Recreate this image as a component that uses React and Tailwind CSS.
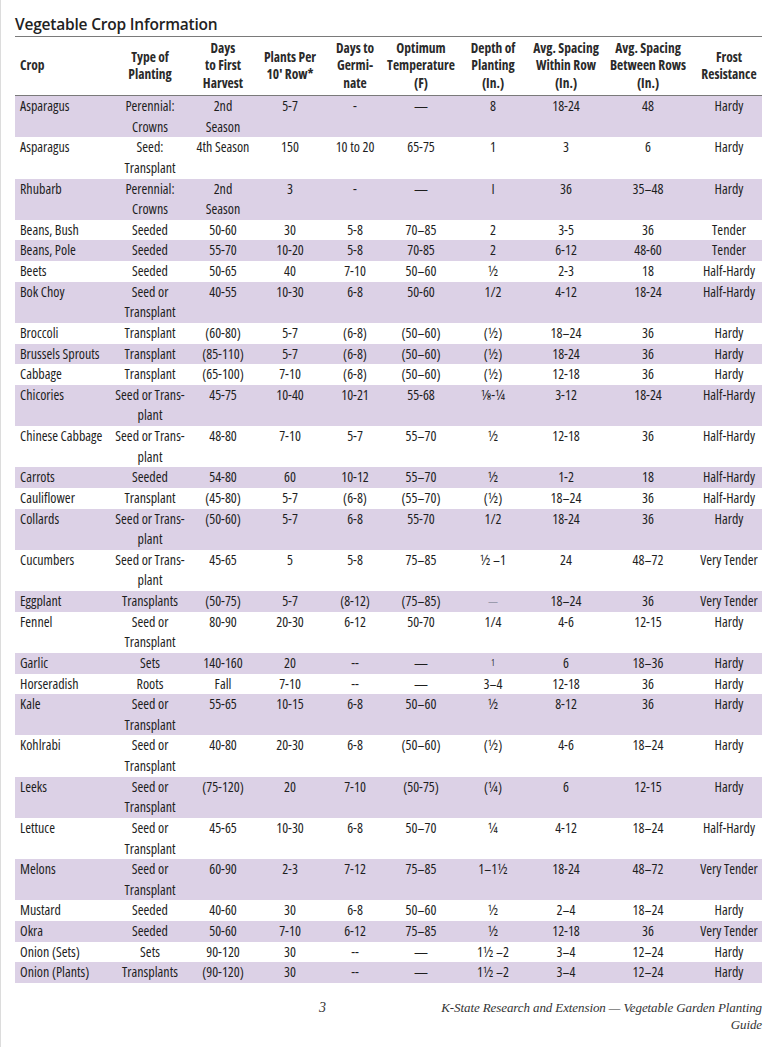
import React from "react";

// column widths in px, they add up to the 747px table
const cols = "grid grid-cols-[97px_76px_70px_64px_66px_66px_78px_68px_96px_66px]";

const headers = [
  ["Crop"],
  ["Type of", "Planting"],
  ["Days", "to First", "Harvest"],
  ["Plants Per", "10' Row*"],
  ["Days to", "Germi-", "nate"],
  ["Optimum", "Temperature", "(F)"],
  ["Depth of", "Planting", "(In.)"],
  ["Avg. Spacing", "Within Row", "(In.)"],
  ["Avg. Spacing", "Between Rows", "(In.)"],
  ["Frost", "Resistance"],
];

const SOP = ["Seed or", "Transplant"];
const SOT = ["Seed or Trans-", "plant"];
const PC = ["Perennial:", "Crowns"];

const rows = [
  ["Asparagus", PC, ["2nd", "Season"], "5-7", "-", "—", "8", "18-24", "48", "Hardy"],
  ["Asparagus", ["Seed:", "Transplant"], "4th Season", "150", "10 to 20", "65-75", "1", "3", "6", "Hardy"],
  ["Rhubarb", PC, ["2nd", "Season"], "3", "-", "—", "I", "36", "35–48", "Hardy"],
  ["Beans, Bush", "Seeded", "50-60", "30", "5-8", "70–85", "2", "3-5", "36", "Tender"],
  ["Beans, Pole", "Seeded", "55-70", "10-20", "5-8", "70-85", "2", "6-12", "48-60", "Tender"],
  ["Beets", "Seeded", "50-65", "40", "7-10", "50–60", "½", "2-3", "18", "Half-Hardy"],
  ["Bok Choy", SOP, "40-55", "10-30", "6-8", "50-60", "1/2", "4-12", "18-24", "Half-Hardy"],
  ["Broccoli", "Transplant", "(60-80)", "5-7", "(6-8)", "(50–60)", "(½)", "18–24", "36", "Hardy"],
  ["Brussels Sprouts", "Transplant", "(85-110)", "5-7", "(6-8)", "(50–60)", "(½)", "18-24", "36", "Hardy"],
  ["Cabbage", "Transplant", "(65-100)", "7-10", "(6-8)", "(50–60)", "(½)", "12-18", "36", "Hardy"],
  ["Chicories", SOT, "45-75", "10-40", "10-21", "55-68", "⅛-¼", "3-12", "18-24", "Half-Hardy"],
  ["Chinese Cabbage", SOT, "48-80", "7-10", "5-7", "55–70", "½", "12-18", "36", "Half-Hardy"],
  ["Carrots", "Seeded", "54-80", "60", "10-12", "55–70", "½", "1-2", "18", "Half-Hardy"],
  ["Cauliflower", "Transplant", "(45-80)", "5-7", "(6-8)", "(55–70)", "(½)", "18–24", "36", "Half-Hardy"],
  ["Collards", SOT, "(50-60)", "5-7", "6-8", "55-70", "1/2", "18-24", "36", "Hardy"],
  ["Cucumbers", SOT, "45-65", "5", "5-8", "75–85", "½ –1", "24", "48–72", "Very Tender"],
  ["Eggplant", "Transplants", "(50-75)", "5-7", "(8-12)", "(75–85)", "small-dash", "18–24", "36", "Very Tender"],
  ["Fennel", SOP, "80-90", "20-30", "6-12", "50-70", "1/4", "4-6", "12-15", "Hardy"],
  ["Garlic", "Sets", "140-160", "20", "--", "—", "sup-1", "6", "18–36", "Hardy"],
  ["Horseradish", "Roots", "Fall", "7-10", "--", "—", "3–4", "12-18", "36", "Hardy"],
  ["Kale", SOP, "55-65", "10-15", "6-8", "50–60", "½", "8-12", "36", "Hardy"],
  ["Kohlrabi", SOP, "40-80", "20-30", "6-8", "(50–60)", "(½)", "4-6", "18–24", "Hardy"],
  ["Leeks", SOP, "(75-120)", "20", "7-10", "(50-75)", "(¼)", "6", "12-15", "Hardy"],
  ["Lettuce", SOP, "45-65", "10-30", "6-8", "50–70", "¼", "4-12", "18–24", "Half-Hardy"],
  ["Melons", SOP, "60-90", "2-3", "7-12", "75–85", "1–1½", "18-24", "48–72", "Very Tender"],
  ["Mustard", "Seeded", "40-60", "30", "6-8", "50–60", "½", "2–4", "18–24", "Hardy"],
  ["Okra", "Seeded", "50-60", "7-10", "6-12", "75–85", "½", "12-18", "36", "Very Tender"],
  ["Onion (Sets)", "Sets", "90-120", "30", "--", "—", "1½ –2", "3–4", "12–24", "Hardy"],
  ["Onion (Plants)", "Transplants", "(90-120)", "30", "--", "—", "1½ –2", "3–4", "12–24", "Hardy"],
];

function CellText({ value }) {
  if (value === "small-dash") return <span className="text-[10px] text-gray-500 align-top">—</span>;
  if (value === "sup-1") return <span className="text-[8px] align-top">1</span>;
  if (Array.isArray(value)) {
    return value.map((line, i) => <div key={i}>{line}</div>);
  }
  return value;
}

function App() {
  return (
    <div className="min-h-[1047px] w-[780px] bg-white border-l border-[#dcdcdc] text-[#1e1e1e] font-['Open_Sans',sans-serif]">
      <div className="pl-[14px] pr-[18px] pt-[13px]">
        <h1 className="font-semibold text-[15.5px] tracking-[-0.2px] leading-[22px] text-[#222]">
          Vegetable Crop Information
        </h1>

        <div className="mt-[1px] border-t-[1.5px] border-b-[1.5px] border-[#7a7a7a]">
          <div className={`${cols} h-[58px] [font-stretch:75%] font-bold text-[13.5px] leading-[17.5px] text-[#2a2a2a]`}>
            {headers.map((h, i) => (
              <div
                key={i}
                className={i === 0 ? "flex flex-col justify-center pl-[5px] whitespace-nowrap" : "flex flex-col justify-center items-center text-center whitespace-nowrap"}
              >
                {h.map((line, j) => (
                  <div key={j}>{line}</div>
                ))}
              </div>
            ))}
          </div>
        </div>

        <div className="[font-stretch:75%] text-[14px] leading-[20.63px]">
          {rows.map((row, r) => (
            <div key={r} className={`${cols} ${r % 2 === 0 ? "bg-[#dcd1e6]" : "bg-white"}`}>
              {row.map((cell, c) => (
                <div key={c} className={c === 0 ? "pl-[5px] whitespace-nowrap" : "text-center whitespace-nowrap"}>
                  <CellText value={cell} />
                </div>
              ))}
            </div>
          ))}
        </div>

        <div className="mt-[16px] flex font-['Liberation_Serif',serif] italic text-[13px] tracking-[-0.1px] leading-[17px] text-[#333]">
          <div className="w-[424px] pl-[304px] text-[14px]">3</div>
          <div className="flex-1 text-right whitespace-nowrap">
            K-State Research and Extension — Vegetable Garden Planting
            <br />
            Guide
          </div>
        </div>
      </div>
    </div>
  );
}

export default App;
